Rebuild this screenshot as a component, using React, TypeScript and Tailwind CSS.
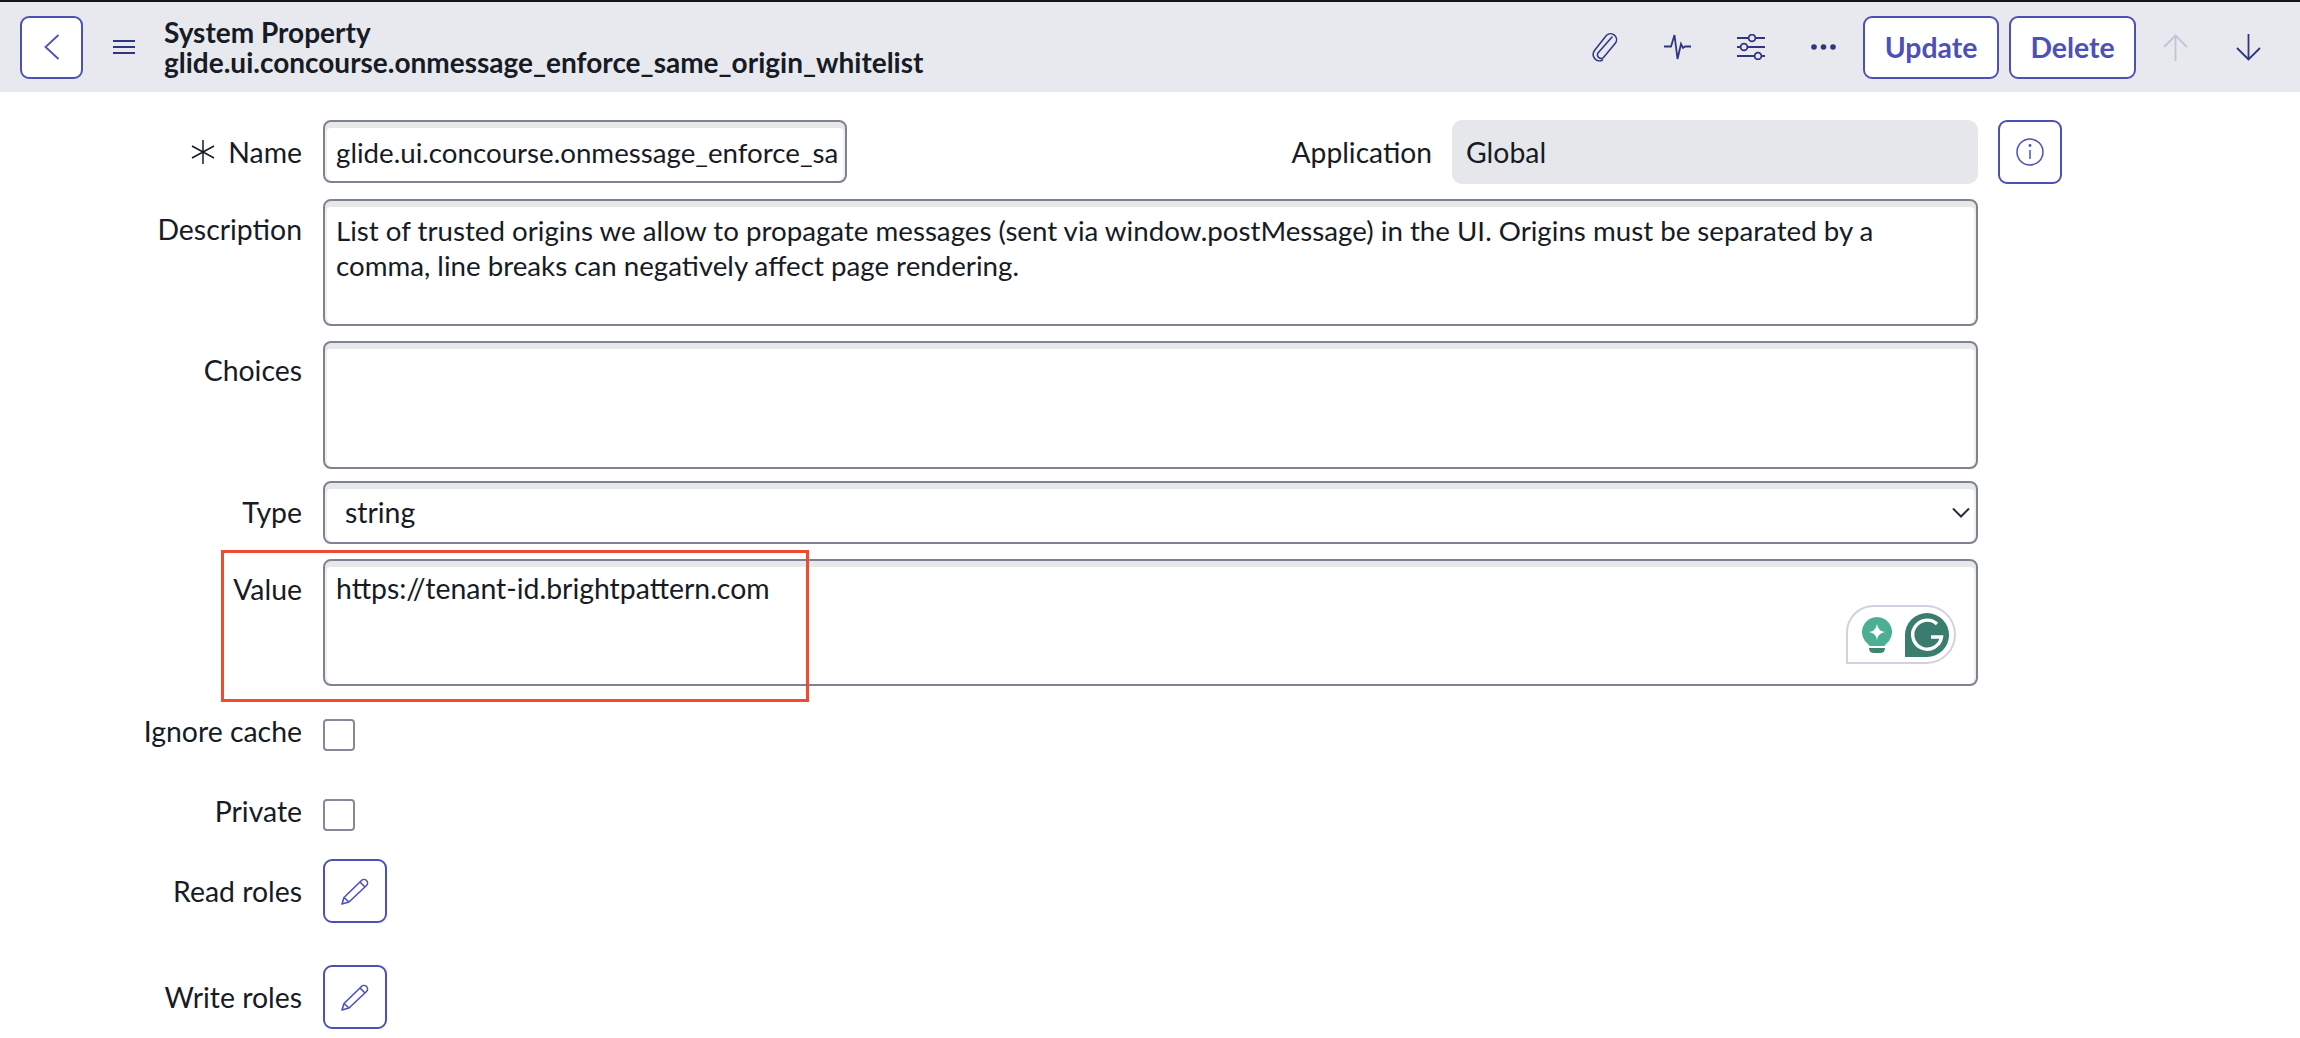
import type { ReactElement, ReactNode } from "react";

const fieldClass =
  "block rounded-[8px] border-2 border-[#7f8391] bg-white shadow-[inset_0_6px_0_#e7e9e9,inset_2px_0_0_#eef0f0,inset_-2px_0_0_#eef0f0] text-[#161b26] outline-none resize-none";

function Label({ children, className }: { children: ReactNode; className: string }) {
  return (
    <div className={`w-[302px] shrink-0 text-right text-[28.4px] leading-[37px] text-[#161b26] ${className}`}>
      {children}
    </div>
  );
}

function IconButton({ children, className }: { children: ReactNode; className: string }) {
  return (
    <button className={`flex size-[64px] items-center justify-center rounded-[9px] border-2 border-[#4c51b7] bg-white ${className}`}>
      {children}
    </button>
  );
}

function PencilIcon(): ReactElement {
  return (
    <svg width="30" height="30" viewBox="0 0 30 30" fill="none" stroke="#4c51b7" strokeWidth="1.6" strokeLinejoin="round">
      <path d="M2 28 L4 21.5 L21.5 4.5 A3.2 3.2 0 0 1 26.5 9.5 L9 26 Z" />
      <path d="M4 21.5 L9 26 M20 6 L25 11" />
    </svg>
  );
}

function TextButton({ children, width }: { children: ReactNode; width: string }) {
  return (
    <button className={`h-[63px] rounded-[9px] border-2 border-[#4c51b7] bg-white text-[28.4px] font-bold text-[#4c51b7] ${width}`}>
      {children}
    </button>
  );
}

function HeaderBar(): ReactElement {
  const navy = "#2f3580";
  return (
    <header className="flex h-[92px] items-center border-t-2 border-[#14141f] bg-[#e8e9ee] pl-[20px]">
      <button className="flex h-[63px] w-[63px] items-center justify-center rounded-[9px] border-2 border-[#4c51b7] bg-white">
        <svg width="16" height="26" viewBox="0 0 16 26" fill="none" stroke="#4c51b7" strokeWidth="1.8">
          <path d="M14.5 1 L1.5 13 L14.5 25" />
        </svg>
      </button>
      <svg className="ml-[30px]" width="22" height="16" viewBox="0 0 22 16" stroke={navy} strokeWidth="2">
        <path d="M0 2 H22 M0 8 H22 M0 14 H22" />
      </svg>
      <div className="ml-[29px] text-[28px] leading-[30px] font-bold text-[#161b26]">
        <div>System Property</div>
        <div>glide.ui.concourse.onmessage_enforce_same_origin_whitelist</div>
      </div>
      <div className="ml-auto flex items-center">
        <svg width="28" height="30" viewBox="0 0 28 30" fill="none" stroke={navy} strokeWidth="1.5" strokeLinecap="round">
          <path d="M21 5 L7 21 A3.6 3.6 0 0 0 12.5 25.5 L24.5 11 A6 6 0 0 0 15.5 3.2 L3.5 18.5 A6.6 6.6 0 0 0 3.7 26.5 A6 6 0 0 0 11.5 28" />
        </svg>
        <svg className="ml-[45px]" width="28" height="26" viewBox="0 0 28 26" fill="none" stroke={navy} strokeWidth="1.8">
          <path d="M0 12.5 H7 L10.5 1 L13.5 25 L17 10 L19 14 L21 12.5 H27" />
        </svg>
        <svg className="ml-[45px]" width="28" height="26" viewBox="0 0 28 26" fill="none" stroke={navy} strokeWidth="1.8">
          <path d="M0 4 H11 M19 4 H28 M0 13 H3 M11 13 H28 M0 22 H17 M25 22 H28" />
          <circle cx="15" cy="4" r="3.4" />
          <circle cx="7" cy="13" r="3.4" />
          <circle cx="21" cy="22" r="3.4" />
        </svg>
        <svg className="ml-[46px]" width="25" height="6" viewBox="0 0 25 6" fill={navy}>
          <circle cx="3" cy="3" r="2.8" />
          <circle cx="12.5" cy="3" r="2.8" />
          <circle cx="22" cy="3" r="2.8" />
        </svg>
        <div className="ml-[27px] flex gap-[10px]">
          <TextButton width="w-[136px]">Update</TextButton>
          <TextButton width="w-[127px]">Delete</TextButton>
        </div>
        <svg className="ml-[27px]" width="25" height="27" viewBox="0 0 25 27" fill="none" stroke="#c1c4d6" strokeWidth="1.8">
          <path d="M12.5 27 V1.5 M1 13 L12.5 1.5 L24 13" />
        </svg>
        <svg className="ml-[48px] mr-[39px]" width="25" height="27" viewBox="0 0 25 27" fill="none" stroke={navy} strokeWidth="1.8">
          <path d="M12.5 0 V25.5 M1 14 L12.5 25.5 L24 14" />
        </svg>
      </div>
    </header>
  );
}

function GrammarlyBadge(): ReactElement {
  return (
    <div className="absolute top-[46px] left-[1846px] flex h-[59px] w-[110px] items-center rounded-tl-[28px] rounded-tr-[30px] rounded-br-[30px] border-2 border-[#d1d2df] bg-white">
      <svg className="ml-[13px]" width="32" height="38" viewBox="0 0 32 38" fill="none">
        <path d="M16 1 A15 15 0 0 1 25 28 Q24 29 23.5 30 H8.500 Q8 29 7 28 A15 15 0 0 1 16 1 Z" fill="#4cae94" />
        <path d="M16 8 Q17 15 24 16 Q17 17 16 24 Q15 17 8 16 Q15 15 16 8 Z" fill="#ffffff" />
        <path d="M8 32 H24 Q24 37 19 37 H13 Q8 37 8 32 Z" fill="#3f8470" />
      </svg>
      <svg className="ml-[12px]" width="44" height="44" viewBox="0 0 44 44" fill="none">
        <path d="M0 44 V22 A22 22 0 1 1 22 44 Z" fill="#3a7d6e" />
        <path d="M32 11 A14.500 14.500 0 1 0 36.500 24 H26" stroke="#ffffff" strokeWidth="3.400" fill="none" />
      </svg>
    </div>
  );
}

export default function App(): ReactElement {
  return (
    <div className="h-[1038px] overflow-hidden bg-white font-['Lato',sans-serif]">
      <HeaderBar />
      <main className="flex flex-col pt-[28px]">
        <div className="flex gap-[21px]">
          <Label className="flex items-center justify-end gap-[12px]">
            <svg width="26" height="24" viewBox="0 0 26 24" fill="none" stroke="#161b26" strokeWidth="1.5">
              <path d="M13 0 V24 M2 6 L24 18 M24 6 L2 18" />
            </svg>
            Name
          </Label>
          <input
            readOnly
            value="glide.ui.concourse.onmessage_enforce_same_origin_whitelist"
            className={`${fieldClass} h-[63px] w-[524px] pt-[1px] pr-[7px] pl-[11px] text-[27.7px] leading-[37px]`}
          />
          <div className="ml-auto flex items-center gap-[20px]">
            <span className="text-[28.2px] text-[#161b26]">Application</span>
            <div className="flex h-[64px] w-[526px] items-center rounded-[10px] bg-[#e6e7ea] pl-[14px] text-[28.4px] text-[#161b26]">
              Global
            </div>
          </div>
          <IconButton className="mr-[238px] ml-[-1px]">
            <svg width="28" height="28" viewBox="0 0 28 28" fill="none" stroke="#4c51b7" strokeWidth="1.5">
              <circle cx="14" cy="14" r="13" />
              <path d="M14 12 V21" />
              <circle cx="14" cy="7.500" r="0.700" />
            </svg>
          </IconButton>
        </div>

        <div className="mt-[15px] flex gap-[21px]">
          <Label className="pt-[12px]">Description</Label>
          <textarea
            readOnly
            value="List of trusted origins we allow to propagate messages (sent via window.postMessage) in the UI. Origins must be separated by a comma, line breaks can negatively affect page rendering."
            className={`${fieldClass} h-[127px] w-[1655px] pt-[12px] pr-[80px] pl-[11px] text-[27.7px] leading-[35px]`}
          />
        </div>

        <div className="mt-[15px] flex gap-[21px]">
          <Label className="pt-[11px]">Choices</Label>
          <textarea readOnly value="" className={`${fieldClass} h-[128px] w-[1655px]`} />
        </div>

        <div className="mt-[12px] flex gap-[21px]">
          <Label className="pt-[13px]">Type</Label>
          <div className={`${fieldClass} flex h-[63px] w-[1655px] items-center justify-between pr-[6px] pl-[20px] text-[28.4px] leading-[37px]`}>
            string
            <svg width="18" height="11" viewBox="0 0 18 11" fill="none" stroke="#2a2e3a" strokeWidth="2">
              <path d="M1 1.500 L9 9.500 L17 1.500" />
            </svg>
          </div>
        </div>

        <div className="relative mt-[15px] flex gap-[21px]">
          <Label className="pt-[12px]">Value</Label>
          <textarea
            readOnly
            value="https://tenant-id.brightpattern.com"
            className={`${fieldClass} h-[127px] w-[1655px] pt-[9px] pl-[11px] text-[28.4px] leading-[37px]`}
          />
          <GrammarlyBadge />
          <div className="pointer-events-none absolute top-[-9px] left-[221px] h-[152px] w-[588px] border-[3px] border-[#ee4b2f]" />
        </div>

        <div className="mt-[33px] flex h-[32px] items-center gap-[21px]">
          <Label className="pb-[7px]">Ignore cache</Label>
          <div className="size-[32px] rounded-[4px] border-2 border-[#858995] bg-white" />
        </div>

        <div className="mt-[48px] flex h-[32px] items-center gap-[21px]">
          <Label className="pb-[7px]">Private</Label>
          <div className="size-[32px] rounded-[4px] border-2 border-[#858995] bg-white" />
        </div>

        <div className="mt-[28px] flex items-center gap-[21px]">
          <Label className="">Read roles</Label>
          <IconButton className="">
            <PencilIcon />
          </IconButton>
        </div>

        <div className="mt-[42px] flex items-center gap-[21px]">
          <Label className="">Write roles</Label>
          <IconButton className="">
            <PencilIcon />
          </IconButton>
        </div>
      </main>
    </div>
  );
}
